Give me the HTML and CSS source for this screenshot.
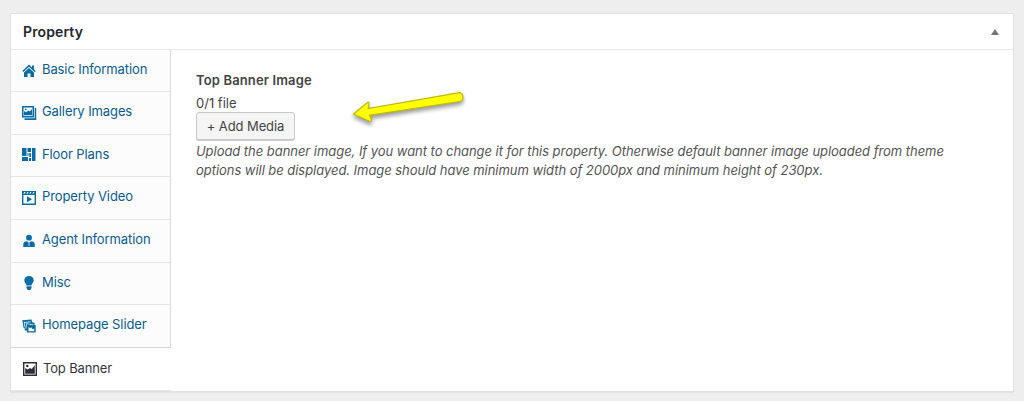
FILE: index.html
```html
<!DOCTYPE html>
<html lang="en">
<head>
<meta charset="utf-8">
<title>Property</title>
<link rel="stylesheet" href="styles.css">
</head>
<body>
<section class="panel">
  <header class="panel-header">
    <h2 class="panel-title">Property</h2>
    <svg class="toggle" width="8" height="6" viewBox="0 0 8 6"><path d="M4 0 8 6H0Z"/></svg>
  </header>
  <div class="panel-body">
    <nav class="tabs">
      <a class="tab"><svg class="icon" viewBox="0 0 16 16"><path d="M8 1.500 1.300 7.900l1.100 1.100L8 3.800 13.600 9l1.100-1.100-1.700-1.700V2.500h-2v1.900Z"/><path d="M3 9.600 8 4.900l5 4.700V14H9.500v-3.500h-3V14H3Z"/></svg><span>Basic Information</span></a>
      <a class="tab"><svg class="icon" viewBox="0 0 16 16"><path fill-rule="evenodd" d="M1 1h12v11.500H1ZM2.500 2.500v8.500h9V2.500Z"/><path d="M3 10.300V6l2 1.300L7.300 5.500 8.800 6.500 11 4v6.300Z"/><circle cx="4.700" cy="4.300" r=".9"/><path d="M13.700 3H15.200v12H3.500V13.300h10.200Z"/></svg><span>Gallery Images</span></a>
      <a class="tab"><svg class="icon" viewBox="0 0 16 16"><path d="M1 1h4.500v8H1ZM1 10h6v4H1ZM6.500 1H10v4H6.500ZM11 1h3.500v13H11ZM6.500 6H7.500v3H6.500ZM8.300 6H10v4H8.300ZM8 11h2v3H8Z"/></svg><span>Floor Plans</span></a>
      <a class="tab"><svg class="icon" viewBox="0 0 16 16"><path fill-rule="evenodd" d="M1 1h14v14H1ZM2.400 5v8.600h11.200V5ZM3.300 2 2.300 3.800h1.200l1-1.800ZM6.300 2 5.300 3.800h1.200l1-1.800ZM9.300 2 8.300 3.800h1.200l1-1.800ZM12.300 2l-1 1.800h1.200l1-1.800Z"/><path d="M6 6.300v6l5-3Z"/></svg><span>Property Video</span></a>
      <a class="tab"><svg class="icon" viewBox="0 0 16 16"><circle cx="8" cy="4.700" r="2.900"/><path fill-rule="evenodd" d="M2.300 14V11c0-2 2-2.700 3.800-2.700L8 10l1.900-1.700c1.800 0 3.800.7 3.800 2.700v3ZM7.600 10.200v2.800h.8v-2.800Z"/></svg><span>Agent Information</span></a>
      <a class="tab"><svg class="icon" viewBox="0 0 16 16"><path d="M8 1c2.800 0 4.700 1.900 4.700 4.300 0 2.500-2 3.100-2.200 5.200h-5C5.300 8.400 3.300 7.800 3.300 5.300 3.300 2.900 5.200 1 8 1ZM5.500 11.300h5v1.500L9.500 15h-3l-1-2.200Z"/></svg><span>Misc</span></a>
      <a class="tab"><svg class="icon" viewBox="0 0 16 16"><path fill-rule="evenodd" d="M1.300 2.200 10.500 1.500 11.200 4.300 13.800 5 13.300 7H14.700V14.500H6V12.700L3.600 12.200 3.900 10.500 2.600 10ZM7.500 9v4.300h5.700V10.500l-1.600.8-1.500-2-1 1Z"/><path class="cut" d="M2.800 4 9.800 3.500v.7L3.600 4.700 4.300 9.200H3.600ZM5.300 5.300 12.300 6.500l-.1.700L5.900 6.100 5.200 10.800 4.500 10.700Z"/></svg><span>Homepage Slider</span></a>
      <a class="tab active"><svg class="icon" viewBox="0 0 16 16"><path fill-rule="evenodd" d="M1 1h14v14H1ZM2.400 2.400v11.200h11.200V2.400Z"/><path d="M3.200 12.700V7l2.500 1.500L8 7l1.800 1 3-3.800v8.500Z"/><circle cx="5.300" cy="5" r="1.200"/></svg><span>Top Banner</span></a>
    </nav>
    <main class="content">
      <h3 class="label">Top Banner Image</h3>
      <p class="count">0/1 file</p>
      <button class="button" type="button">+ Add Media</button>
      <p class="description"><span class="line">Upload the banner image, If you want to change it for this property. Otherwise default banner image uploaded from theme</span> <span class="line">options will be displayed. Image should have minimum width of 2000px and minimum height of 230px.</span></p>
    </main>
  </div>
</section>
<svg class="arrow" width="124" height="50" viewBox="346 84 124 50"><path d="M353.500 114 367.500 102.500Q369.500 101.500 369 104L368.200 108.500 458 92.800C463.500 92 465 100 459.500 101.500L369.500 115.300 371.500 119.500Q372 122 369.500 121.200Z"/></svg>
</body>
</html>
```
FILE: styles.css
```css
* { box-sizing: border-box; }
body {
  margin: 0;
  height: 401px;
  padding: 13px 10px 0;
  overflow: hidden;
  background: #eee;
  color: #444;
  font: 13px/19px Inter, sans-serif;
}
h2, h3, p { margin: 0; }
.panel {
  width: 1004px;
  height: 379px;
  background: #fff;
  border: 1px solid #e1e1e1;
  box-shadow: 0 1px 1px rgba(0, 0, 0, .04);
}
.panel-header {
  display: flex;
  align-items: center;
  justify-content: space-between;
  height: 36px;
  padding: 0 14px 0 12px;
  border-bottom: 1px solid #e8e8e8;
}
.panel-title {
  color: #23282d;
  font-size: 14px;
  font-weight: 600;
  letter-spacing: .12px;
}
.toggle { fill: #72777c; }
.panel-body { display: flex; height: 341px; }
.tabs { display: flex; flex-direction: column; width: 160px; }
.tab {
  display: flex;
  align-items: center;
  gap: 5px;
  height: 42.670px;
  flex: none;
  padding: 0 0 2px 10px;
  color: #0a5c91;
  background: #fcfcfc;
  border-right: 1px solid #dcdcdc;
  border-bottom: 1px solid #e6e6e6;
  letter-spacing: -.1px;
  white-space: nowrap;
}
.tab:nth-child(1) { height: 42px; }
.tab:nth-child(4), .tab:nth-child(7) { padding-bottom: 3px; }
.tab:nth-child(7) { border-bottom-color: #d5d5d5; }
.icon { width: 16px; height: 16px; flex: none; fill: #0a6ca5; position: relative; top: 1px; }
.cut { fill: #fcfcfc; }
.active {
  padding: 0 0 0 11px;
  background: #fff;
  color: #32373c;
  border-right-color: transparent;
  letter-spacing: -.15px;
}
.active .icon { fill: #2c3035; top: 0; }
.content { padding: 20px 0 0 25px; width: 800px; }
.label { font-size: 13px; line-height: 20px; font-weight: 600; letter-spacing: .14px; }
.count { margin-top: 4px; line-height: 18px; }
.button {
  display: block;
  width: 99px;
  height: 28px;
  padding: 0;
  background: #f5f5f5;
  border: 1px solid #c9c9c9;
  border-radius: 3px;
  box-shadow: 0 1px 0 #ccc;
  color: #444;
  font: inherit;
  letter-spacing: -.1px;
}
.description { margin-top: 2px; color: #555; font-style: italic; letter-spacing: -.045px; }
.line { display: inline-block; white-space: nowrap; }
.arrow {
  position: absolute;
  left: 346px;
  top: 84px;
  fill: #ff0;
  stroke: #bdbb08;
  stroke-width: 1.200;
  filter: drop-shadow(0 3px 2px rgba(0, 0, 0, .4));
}
```
